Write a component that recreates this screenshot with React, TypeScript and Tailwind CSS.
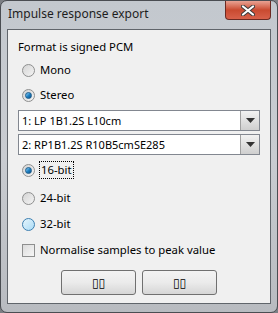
import React from 'react';

const Radio: React.FC<{ checked?: boolean; hover?: boolean }> = ({ checked, hover }) => (
  <span
    className={`relative flex h-[13px] w-[13px] shrink-0 items-center justify-center rounded-full border ${
      hover ? 'border-[#3c7fb1] bg-gradient-to-br from-[#e6f5fc] to-[#a9dbf6]' : 'border-[#8e8f8f] bg-gradient-to-br from-[#d4d4d4] to-[#f4f4f4]'
    }`}
  >
    {checked && (
      <span className="h-[7px] w-[7px] rounded-full border border-[#1b5b8a] bg-gradient-to-br from-[#8fd3f8] via-[#1f84c6] to-[#0d4c85]" />
    )}
  </span>
);

const Combo: React.FC<{ text: string }> = ({ text }) => (
  <div className="flex h-[21px] items-stretch border border-[#828790] bg-white">
    <div className="flex flex-1 items-center pl-[3px] text-[11px] text-black">{text}</div>
    <div className="flex w-[19px] items-center justify-center border-l border-[#a0a0a0] bg-gradient-to-b from-[#f2f2f2] to-[#cfcfcf]">
      <svg width="9" height="5" viewBox="0 0 9 5">
        <path d="M0 0 H9 L4.5 5 Z" fill="#333" />
      </svg>
    </div>
  </div>
);

const Button: React.FC = () => (
  <button className="flex h-[25px] w-[75px] items-center justify-center rounded-[3px] border border-[#707070] bg-gradient-to-b from-[#f3f3f3] via-[#ebebeb] to-[#d6d6d6] text-[12px] leading-none text-black font-['DejaVu_Sans',sans-serif]">
    ▯▯
  </button>
);

export default function App() {
  return (
    <div className="h-[313px] w-[278px] overflow-hidden bg-[#7c7f84] font-['Noto_Sans',sans-serif]">
      <div className="flex h-full w-full flex-col rounded-[7px] border border-[#4a4d52] bg-gradient-to-b from-[#c3c8ce] via-[#c9ccd1] to-[#b8bbc0]">
        {/* title bar */}
        <div className="flex h-[28px] shrink-0 items-start justify-between">
          <span className="pl-[7px] pt-[5px] text-[12px] leading-[16px] text-[#1e1e1e]">Impulse response export</span>
          <div className="mr-[6px] flex h-[19px] w-[46px] items-center justify-center rounded-b-[4px] border border-t-0 border-[#6b2a22] bg-gradient-to-b from-[#e8a293] via-[#c94a30] to-[#d7614a]">
            <svg width="14" height="11" viewBox="0 0 14 11">
              <path d="M2 1.5 L12 9.5 M12 1.5 L2 9.5" stroke="#3a3a3a" strokeWidth="4" strokeLinecap="round" />
              <path d="M2 1.5 L12 9.5 M12 1.5 L2 9.5" stroke="#fff" strokeWidth="2.2" strokeLinecap="round" />
            </svg>
          </div>
        </div>
        {/* client area */}
        <div className="mx-[6px] mb-[8px] flex flex-1 flex-col border border-[#60656b] bg-[#f0f0f0] px-[10px] pt-[9px] text-[11.3px] leading-[16px] text-black">
          <div>Format is signed PCM</div>
          <div className="mt-[7px] flex items-center gap-[5px] pl-[4px]">
            <Radio />
            <span>Mono</span>
          </div>
          <div className="mt-[9px] flex items-center gap-[5px] pl-[4px]">
            <Radio checked />
            <span>Stereo</span>
          </div>
          <div className="mt-[7px]">
            <Combo text="1: LP 1B1.2S L10cm" />
          </div>
          <div className="mt-[3px]">
            <Combo text="2: RP1B1.2S R10B5cmSE285" />
          </div>
          <div className="mt-[6px] flex items-center gap-[4px] pl-[4px]">
            <Radio checked />
            <span className="border border-dotted border-black px-[1px]">16-bit</span>
          </div>
          <div className="mt-[11px] flex items-center gap-[5px] pl-[4px]">
            <Radio />
            <span>24-bit</span>
          </div>
          <div className="mt-[10px] flex items-center gap-[5px] pl-[4px]">
            <Radio hover />
            <span>32-bit</span>
          </div>
          <div className="mt-[10px] flex items-center gap-[5px] pl-[4px]">
            <span className="h-[13px] w-[13px] shrink-0 border border-[#8e8f8f] bg-gradient-to-br from-[#dcdcdc] to-[#f6f6f6]" />
            <span>Normalise samples to peak value</span>
          </div>
          <div className="mt-[12px] flex justify-center gap-[6px]">
            <Button />
            <Button />
          </div>
        </div>
      </div>
    </div>
  );
}
